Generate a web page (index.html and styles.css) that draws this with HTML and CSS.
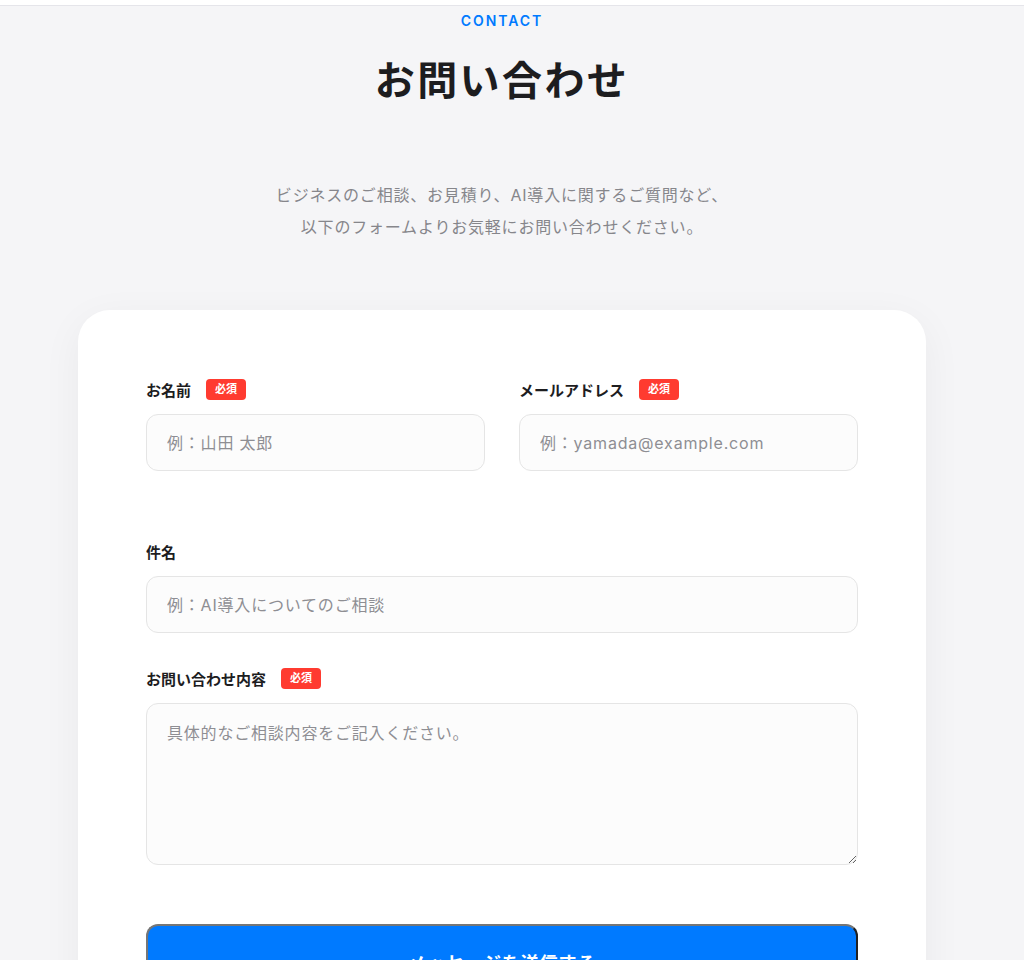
FILE: index.html
```html
<!DOCTYPE html>
<html lang="ja">
<head>
<meta charset="utf-8">
<title>お問い合わせ</title>
<link rel="stylesheet" href="styles.css">
</head>
<body>
<div class="topbar"></div>
<main class="page">
  <section class="contact">
    <p class="eyebrow">CONTACT</p>
    <h1 class="title">お問い合わせ</h1>
    <p class="lead">ビジネスのご相談、お見積り、AI導入に関するご質問など、<br>以下のフォームよりお気軽にお問い合わせください。</p>

    <form class="card">
      <div class="grid">
        <div class="group">
          <div class="label-row"><label class="label">お名前</label><span class="req">必須</span></div>
          <input class="field" type="text" placeholder="例：山田 太郎">
        </div>
        <div class="group">
          <div class="label-row"><label class="label">メールアドレス</label><span class="req">必須</span></div>
          <input class="field" type="email" placeholder="例：yamada@example.com">
        </div>
      </div>
      <div class="group spaced">
        <div class="label-row"><label class="label">件名</label></div>
        <input class="field" type="text" placeholder="例：AI導入についてのご相談">
      </div>
      <div class="group">
        <div class="label-row"><label class="label">お問い合わせ内容</label><span class="req">必須</span></div>
        <textarea class="field area" placeholder="具体的なご相談内容をご記入ください。"></textarea>
      </div>
      <button class="submit" type="button">メッセージを送信する</button>
    </form>
  </section>
</main>
</body>
</html>
```

FILE: styles.css
```css
* { box-sizing: border-box; }

html, body {
  margin: 0;
  padding: 0;
  background: #f5f5f7;
  font-family: Inter, "Noto Sans CJK JP", sans-serif;
  color: #1d1d1f;
}

.topbar {
  height: 6px;
  background: #ffffff;
  border-bottom: 1px solid #e5e5ea;
}

.page {
  padding-right: 20px;
}

.contact {
  width: 848px;
  margin: 0 auto;
  display: flex;
  flex-direction: column;
  align-items: stretch;
  text-align: center;
}

.eyebrow {
  margin: 5px 0 0;
  font-size: 14px;
  line-height: 20px;
  font-weight: 600;
  letter-spacing: 0.14em;
  color: #007aff;
}

.title {
  margin: 22px 0 0;
  font-size: 40px;
  line-height: 56px;
  font-weight: 700;
  letter-spacing: 0.06em;
  color: #1d1d1f;
}

.lead {
  margin: 70px 0 0;
  font-size: 16px;
  line-height: 32px;
  letter-spacing: 0.05em;
  color: #86868b;
}

.card {
  margin-top: 67px;
  background: #ffffff;
  border-radius: 32px;
  padding: 69px 68px 68px;
  box-shadow: 0 10px 40px rgba(0, 0, 0, 0.05);
  text-align: left;
  display: flex;
  flex-direction: column;
}

.grid {
  display: grid;
  grid-template-columns: 1fr 1fr;
  column-gap: 34px;
  margin-bottom: 70px;
}

.group.spaced {
  margin-bottom: 35px;
}

.label-row {
  display: flex;
  align-items: center;
  height: 21px;
  margin-bottom: 14px;
}

.label {
  font-size: 15px;
  font-weight: 700;
  color: #1d1d1f;
}

.req {
  margin-left: 15px;
  background: #ff3b30;
  color: #ffffff;
  font-size: 11px;
  font-weight: 700;
  line-height: 15px;
  padding: 3px 9px;
  border-radius: 4px;
}

.field {
  display: block;
  width: 100%;
  height: 57px;
  padding: 16px 20px;
  border: 1px solid #e5e5e5;
  border-radius: 12px;
  background: #fcfcfc;
  font-family: Inter, "Noto Sans CJK JP", sans-serif;
  font-size: 16px;
  line-height: 24px;
  letter-spacing: 0.05em;
  color: #1d1d1f;
  outline: none;
}

.field::placeholder {
  color: #8e8e93;
}

.area {
  height: 162px;
  padding-top: 17px;
  resize: vertical;
}

.submit {
  margin-top: 59px;
  width: 100%;
  padding: 24px;
  background: #007aff;
  color: #ffffff;
  border: 2px outset #767676;
  border-radius: 12px;
  font-family: Inter, "Noto Sans CJK JP", sans-serif;
  font-size: 18px;
  line-height: 27px;
  font-weight: 700;
  letter-spacing: 0.05em;
}
```
